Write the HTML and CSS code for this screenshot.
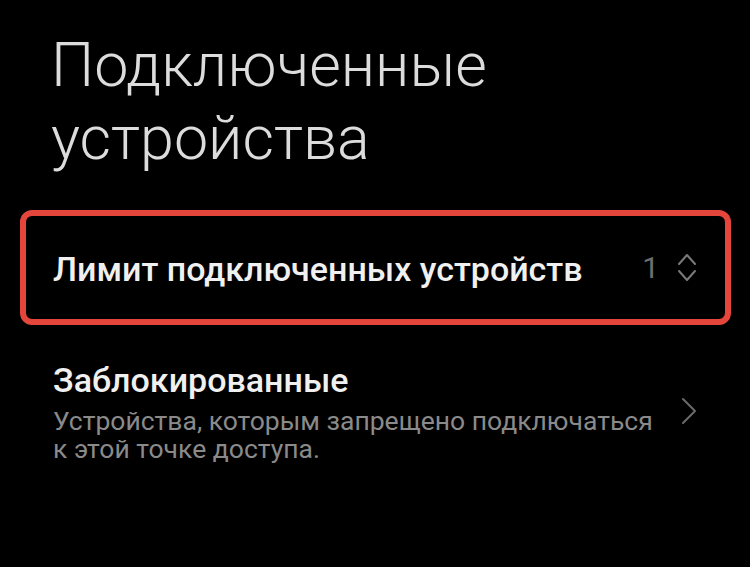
FILE: index.html
```html
<!DOCTYPE html>
<html lang="ru">
<head>
<meta charset="utf-8">
<link rel="stylesheet" href="styles.css">
</head>
<body>
<div class="page">
  <h1 class="title">Подключенные<br>устройства</h1>
  <div class="limit">
    <span class="limit-label">Лимит подключенных устройств</span>
    <span class="limit-value">1</span>
    <svg class="updown" width="20" height="32" viewBox="0 0 20 32">
      <polyline points="2,12 10,3 18,12" fill="none" stroke="#7a7a7a" stroke-width="2" stroke-linecap="round" stroke-linejoin="round"/>
      <polyline points="2,19 10,28 18,19" fill="none" stroke="#7a7a7a" stroke-width="2" stroke-linecap="round" stroke-linejoin="round"/>
    </svg>
  </div>
  <div class="blocked">
    <div class="blocked-text">
      <div class="blocked-title">Заблокированные</div>
      <div class="blocked-sub">Устройства, которым запрещено подключаться<br>к этой точке доступа.</div>
    </div>
    <svg class="chev" width="16" height="28" viewBox="0 0 16 28">
      <polyline points="2,2 14,14 2,26" fill="none" stroke="#6a6a6a" stroke-width="2" stroke-linecap="round" stroke-linejoin="round"/>
    </svg>
  </div>
</div>
</body>
</html>
```
FILE: styles.css
```css
html, body {
  margin: 0;
  padding: 0;
  background: #000;
}
body {
  width: 750px;
  height: 567px;
  overflow: hidden;
  font-family: Roboto, "Noto Sans", sans-serif;
}
.page {
  padding: 29px 0 0 0;
}
.title {
  margin: 0 0 0 51px;
  font-weight: 300;
  font-size: 61px;
  line-height: 73px;
  color: #dcdcdc;
}
.limit {
  margin: 35px 19px 0 20px;
  height: 103px;
  border: 6px solid #e4463b;
  border-radius: 12px;
  display: flex;
  align-items: center;
  padding: 0 28px 0 27px;
}
.limit-label {
  flex: 1;
  font-weight: 500;
  font-size: 34px;
  color: #f0f0f0;
  padding-top: 3px;
}
.limit-value {
  font-size: 30px;
  color: #6e6e6e;
  margin-right: 18px;
}
.updown {
  display: block;
}
.blocked {
  display: flex;
  align-items: center;
  margin: 34px 53px 0 53px;
}
.blocked-text {
  flex: 1;
}
.blocked-title {
  font-weight: 500;
  font-size: 34px;
  line-height: 42px;
  color: #f0f0f0;
}
.blocked-sub {
  font-size: 26.5px;
  line-height: 28px;
  color: #8a8a8a;
  margin-top: 6px;
}
.chev {
  display: block;
}
```
